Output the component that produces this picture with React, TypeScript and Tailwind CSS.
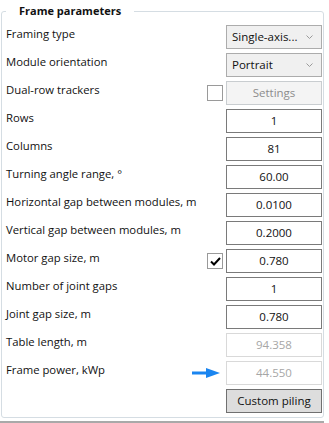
import React from 'react';

const font = { fontFamily: '"Open Sans", "Noto Sans", sans-serif' };

const Chevron = () => (
    <svg width="7" height="4" viewBox="0 0 7 4" className="shrink-0">
        <path d="M0.5 0.5 L3.5 3.5 L6.5 0.5" fill="none" stroke="#9a9a9a" strokeWidth="1" />
    </svg>
);

const Field = ({ value, disabled }: { value: string; disabled?: boolean }) => (
    <div
        className={
            disabled
                ? 'w-[96px] h-[24px] border border-[#d9d9d9] bg-white text-[#a6a6a6] flex items-center justify-center text-[11.5px]'
                : 'w-[96px] h-[24px] border border-[#7a7a7a] bg-white text-[#111] flex items-center justify-center text-[11.5px]'
        }
    >
        {value}
    </div>
);

const Select = ({ value }: { value: string }) => (
    <div className="w-[96px] h-[24px] border border-[#acacac] bg-[#f0f0f0] text-[#111] flex items-center justify-between pl-[5px] pr-[8px] text-[11.5px]">
        <span>{value}</span>
        <Chevron />
    </div>
);

const Check = ({ on }: { on?: boolean }) => (
    <div className="w-[16px] h-[16px] border border-[#9a9a9a] bg-white flex items-center justify-center">
        {on && (
            <svg width="11" height="9" viewBox="0 0 11 9">
                <path d="M1 4.5 L4 7.5 L10 1" fill="none" stroke="#000" strokeWidth="2" />
            </svg>
        )}
    </div>
);

const Row = ({ label, children }: { label: string; children: React.ReactNode }) => (
    <div className="flex items-center justify-between h-[24px]">
        <span className="text-[11.3px] text-[#111] -mt-[5px]">{label}</span>
        <div className="flex items-center gap-[3px]">{children}</div>
    </div>
);

const App = () => {
    return (
        <div className="w-[329px] h-[423px] bg-white relative" style={font}>
            <fieldset className="ml-[1px] w-[323px] h-[418px] border border-[#d5dde3] rounded-[3px] pl-[4px] pr-[1px]">
                <legend className="px-[13px] text-[11px] font-bold text-[#111] leading-[22px]">Frame parameters</legend>
                <div className="flex flex-col gap-[4px] mt-[3px]">
                    <Row label="Framing type">
                        <Select value="Single-axis..." />
                    </Row>
                    <Row label="Module orientation">
                        <Select value="Portrait" />
                    </Row>
                    <Row label="Dual-row trackers">
                        <Check />
                        <div className="w-[96px] h-[24px] border border-[#c9cdd0] bg-[#f4f4f4] text-[#8c8c8c] flex items-center justify-center text-[11.5px]">
                            Settings
                        </div>
                    </Row>
                    <Row label="Rows">
                        <Field value="1" />
                    </Row>
                    <Row label="Columns">
                        <Field value="81" />
                    </Row>
                    <Row label="Turning angle range, °">
                        <Field value="60.00" />
                    </Row>
                    <Row label="Horizontal gap between modules, m">
                        <Field value="0.0100" />
                    </Row>
                    <Row label="Vertical gap between modules, m">
                        <Field value="0.2000" />
                    </Row>
                    <Row label="Motor gap size, m">
                        <Check on />
                        <Field value="0.780" />
                    </Row>
                    <Row label="Number of joint gaps">
                        <Field value="1" />
                    </Row>
                    <Row label="Joint gap size, m">
                        <Field value="0.780" />
                    </Row>
                    <Row label="Table length, m">
                        <Field value="94.358" disabled />
                    </Row>
                    <Row label="Frame power, kWp">
                        <svg width="28" height="10" viewBox="0 0 28 10" className="mr-[3px]">
                            <rect x="0" y="3.5" width="17" height="3" fill="#1a85f0" />
                            <path d="M14 0 L28 5 L14 10 Z" fill="#1a85f0" />
                        </svg>
                        <Field value="44.550" disabled />
                    </Row>
                    <div className="flex justify-end">
                        <div className="w-[96px] h-[24px] border border-[#707070] bg-[#dddddd] text-[#111] flex items-center justify-center text-[11.5px]">
                            Custom piling
                        </div>
                    </div>
                </div>
            </fieldset>
            <div className="absolute left-0 top-[421px] w-[324px] h-[2px] bg-[#a9a9a9]" />
        </div>
    );
};

export default App;
